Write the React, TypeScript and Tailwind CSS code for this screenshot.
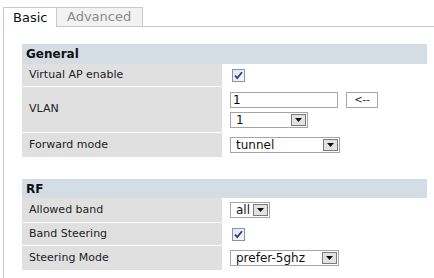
import React from "react";

const font = { fontFamily: '"DejaVu Sans", Verdana, sans-serif' };

function Check() {
  return (
    <svg width="13" height="13" viewBox="0 0 13 13">
      <defs>
        <linearGradient id="cbg" x1="0" y1="0" x2="1" y2="1">
          <stop offset="0" stopColor="#dfe3ec" />
          <stop offset="1" stopColor="#f8f9fb" />
        </linearGradient>
      </defs>
      <rect x="0.5" y="0.5" width="12" height="12" fill="url(#cbg)" stroke="#8c93a6" />
      <path d="M3 6.5 L5.2 9 L10 3.2" fill="none" stroke="#2b3c8c" strokeWidth="1.8" />
    </svg>
  );
}

function Select({ value, width }: { value: string; width: string }) {
  return (
    <div className={`flex h-[16px] items-stretch border border-[#a5a5a5] bg-white ${width}`}>
      <div className="flex-1 pl-[5px] text-[12px] leading-[14px] text-[#111]">{value}</div>
      <div className="m-[1px] flex w-[15px] items-center justify-center border border-[#7a7a7a] bg-[#e2e2e2]">
        <svg width="7" height="4" viewBox="0 0 7 4">
          <path d="M0 0 H7 L3.5 4 Z" fill="#111" />
        </svg>
      </div>
    </div>
  );
}

function Row({ label, h, children }: { label: string; h: string; children?: React.ReactNode }) {
  return (
    <div className={`flex ${h}`}>
      <div className="flex w-[200px] items-center bg-[#e0e0e0] pl-[7px] text-[11px] text-[#222]">{label}</div>
      <div className="ml-[2px] flex flex-1 flex-col justify-center bg-white pl-[6px]">{children}</div>
    </div>
  );
}

export default function App() {
  return (
    <div className="h-[278px] w-[434px] overflow-hidden bg-white" style={font}>
      <div className="flex pt-[7px] pl-[3px]">
        <div className="flex h-[20px] w-[54px] items-center border-x border-t border-[#c8c8c8] bg-white pl-[9px] text-[13px] text-[#111]">
          Basic
        </div>
        <div className="flex h-[20px] w-[86px] items-center border-r border-t border-b border-[#c8c8c8] bg-[#f2f2f2] pl-[10px] text-[13px] text-[#8a8a8a]">
          Advanced
        </div>
        <div className="h-[20px] flex-1 border-b border-[#c8c8c8]" />
      </div>
      <div className="ml-[3px] h-[260px] border-l border-[#c8c8c8] pt-[17px] pl-[18px]">
        <div className="w-[405px]">
          <div className="flex h-[20px] items-center bg-[#d4dce4] pl-[4px] text-[12px] font-bold text-[#111]">General</div>
          <Row label="Virtual AP enable" h="h-[22px]">
            <div className="pl-[2px]"><Check /></div>
          </Row>
          <div className="h-[1px] bg-white" />
          <Row label="VLAN" h="h-[45px]">
            <div className="flex items-center">
              <div className="h-[16px] w-[108px] border border-[#a5a5a5] bg-white pl-[2px] text-[12px] leading-[14px]">1</div>
              <div className="ml-[8px] flex h-[16px] w-[32px] items-center justify-center border border-[#a5a5a5] bg-white text-[10px] leading-[14px] text-[#222]">
                &lt;--
              </div>
            </div>
            <div className="mt-[4px]">
              <Select value="1" width="w-[78px]" />
            </div>
          </Row>
          <div className="h-[1px] bg-white" />
          <Row label="Forward mode" h="h-[24px]">
            <Select value="tunnel" width="w-[110px]" />
          </Row>
          <div className="h-[22px]" />
          <div className="flex h-[19px] items-center bg-[#d4dce4] pl-[4px] text-[12px] font-bold text-[#111]">RF</div>
          <Row label="Allowed band" h="h-[24px]">
            <Select value="all" width="w-[40px]" />
          </Row>
          <div className="h-[1px] bg-white" />
          <Row label="Band Steering" h="h-[22px]">
            <div className="pl-[2px]"><Check /></div>
          </Row>
          <div className="h-[1px] bg-white" />
          <Row label="Steering Mode" h="h-[24px]">
            <Select value="prefer-5ghz" width="w-[109px]" />
          </Row>
        </div>
      </div>
    </div>
  );
}
